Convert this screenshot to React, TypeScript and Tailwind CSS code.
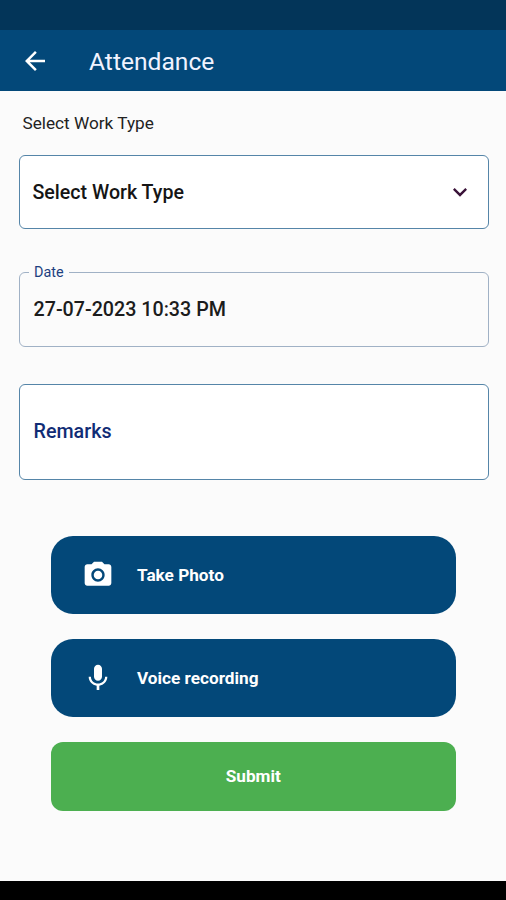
import { MdArrowBack, MdExpandMore, MdMic, MdPhotoCamera } from 'react-icons/md';

const App = () => {
  return (
    <div className="flex h-[900px] w-full flex-col bg-[#fbfbfb] font-['Roboto',sans-serif]">
      <div className="h-[30px] shrink-0 bg-[#033559]" />
      <header className="flex h-[61px] shrink-0 items-center bg-[#034879] pl-5 text-[#f1f3ff]">
        <MdArrowBack className="size-[30px] text-white" />
        <h1 className="ml-[39px] pt-[3px] text-[24.6px] leading-none">Attendance</h1>
      </header>

      <main className="flex-1 pr-[17.5px] pl-[18.5px]">
        <p className="mt-[22px] ml-1 text-[17.2px] leading-5 text-[#222]">Select Work Type</p>

        <button className="mt-[22px] flex h-[74px] w-full items-center justify-between rounded-[6px] border-[1.5px] border-[#5585a8] bg-white pr-[14px] pl-[13px] text-left">
          <span className="pt-[2px] text-[19.6px] leading-none font-medium text-[#151515]">Select Work Type</span>
          <MdExpandMore className="size-7 text-[#3a1238]" />
        </button>

        <fieldset className="mt-[35px] h-[83px] w-full rounded-[6px] border-[1.5px] border-[#a0b1c5] pl-[9px]">
          <legend className="px-[5.5px] pt-px text-[14.4px] leading-4 text-[#1d3f80]">Date</legend>
          <p className="mt-[17px] ml-[5px] text-[19.7px] leading-6 font-medium text-[#1c1c1c]">27-07-2023 10:33 PM</p>
        </fieldset>

        <div className="mt-[37px] flex h-[96px] items-center rounded-[6px] border-[1.5px] border-[#5585a8] bg-white pl-[14px]">
          <span className="text-[19.7px] leading-none font-medium text-[#112c75]">Remarks</span>
        </div>

        <div className="mt-[56px] flex flex-col pr-[33px] pl-[32.5px]">
          <button className="flex h-[78px] items-center rounded-[22px] bg-[#034879] pl-[31px] text-white">
            <MdPhotoCamera className="size-8" />
            <span className="ml-[23px] pt-[2px] text-[17.2px] leading-none font-bold">Take Photo</span>
          </button>
          <button className="mt-[25px] flex h-[78px] items-center rounded-[22px] bg-[#034879] pl-[31px] text-white">
            <MdMic className="size-8" />
            <span className="ml-[23px] pt-[2px] text-[17.2px] leading-none font-bold">Voice recording</span>
          </button>
          <button className="mt-[25px] h-[69px] rounded-[12px] bg-[#4caf50] pt-px text-[17.2px] leading-none font-bold text-white">
            Submit
          </button>
        </div>
      </main>

      <div className="h-[19px] shrink-0 bg-black" />
    </div>
  );
};

export default App;
